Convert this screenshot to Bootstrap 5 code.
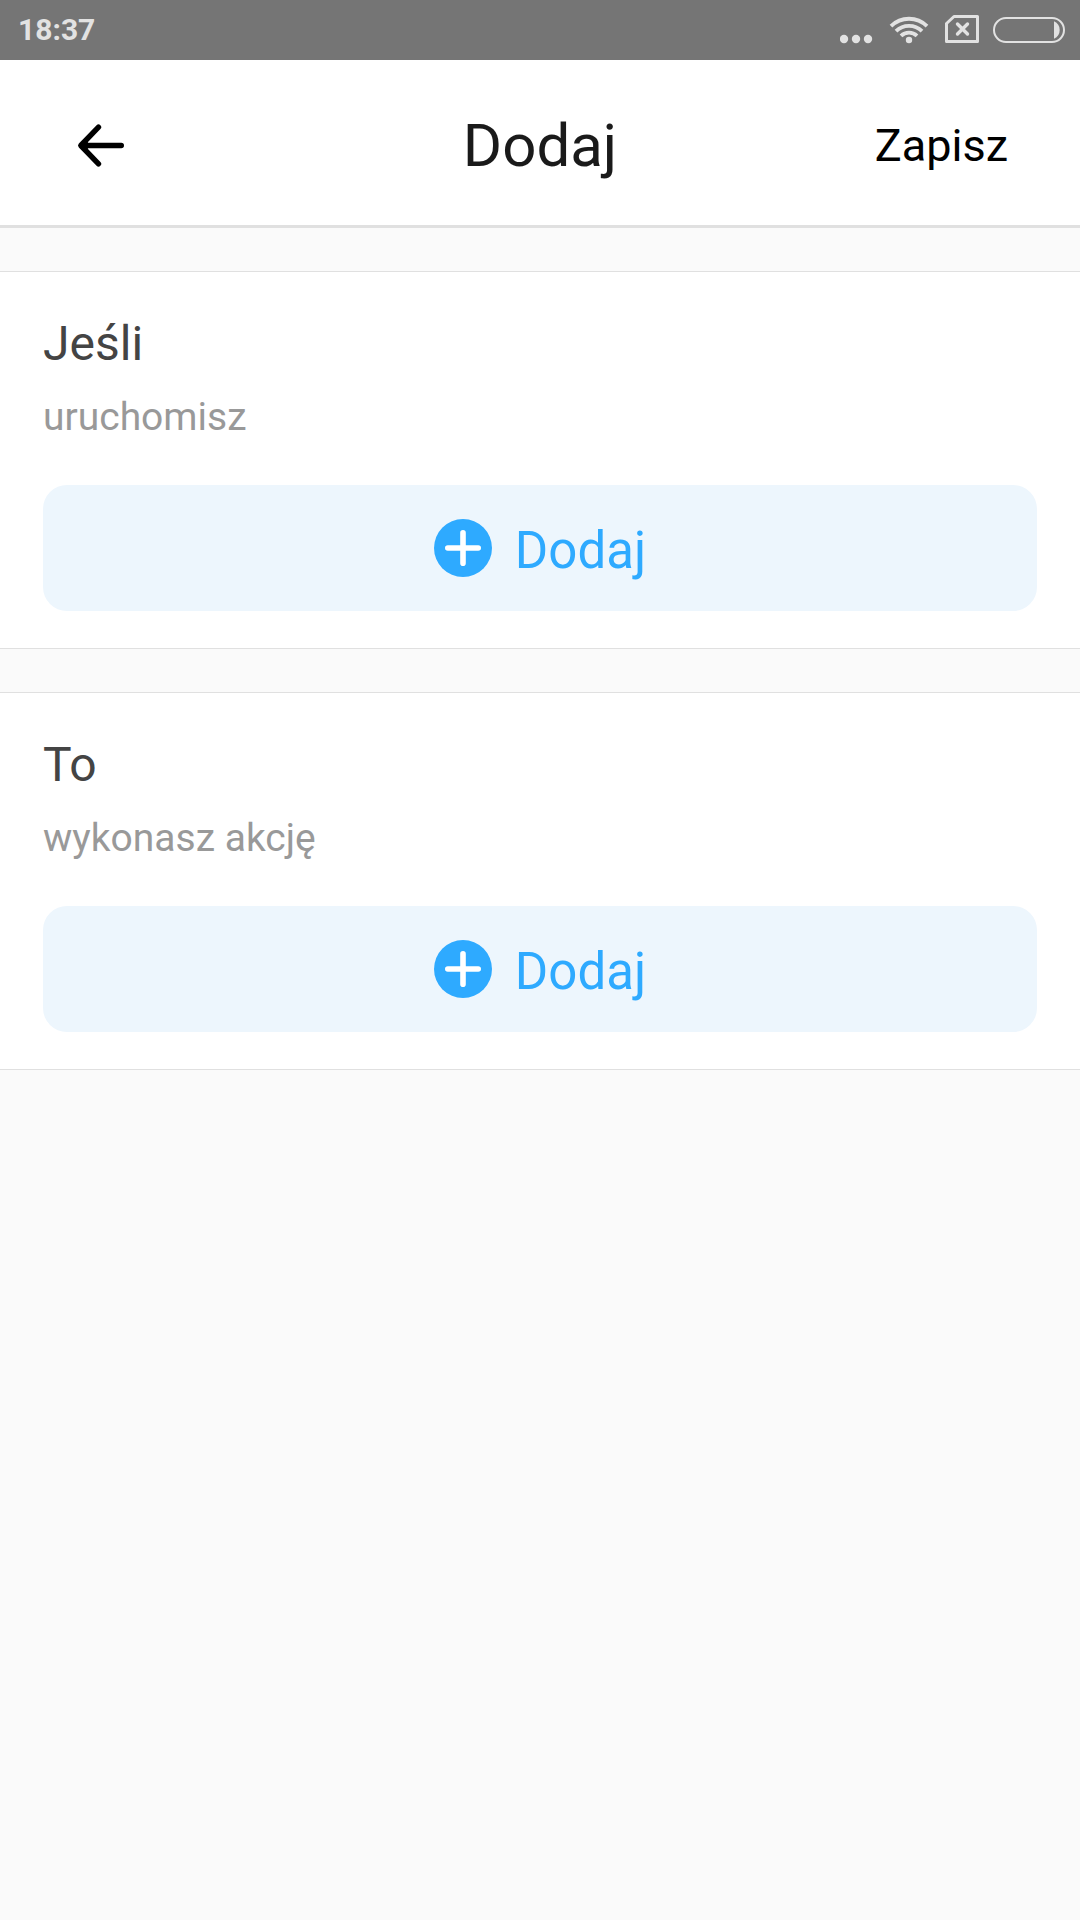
<!DOCTYPE html>
<html lang="pl">
<head>
<meta charset="utf-8">
<meta name="viewport" content="width=device-width, initial-scale=1">
<title>Dodaj</title>
<link href="https://cdn.jsdelivr.net/npm/bootstrap@5.3.0/dist/css/bootstrap.min.css" rel="stylesheet">
<style>
  body { font-family: Roboto, "Noto Sans", sans-serif; background: #fafafa; }
  svg { display: block; flex: none; }
  .status-bar { height: 60px; padding: 0 15px 0 18px; background: #757575; color: #e2e2e2; }
  .status-time { font-size: 30px; line-height: 60px; }
  .status-icons { gap: 14px; }
  .app-bar { height: 168px; padding: 6px 72px 0; border-bottom: 3px solid #e0e0e0; }
  .app-side { flex: 1 0 0; }
  .app-title { font-size: 60px; line-height: 72px; color: #1a1a1a; }
  .save-btn { font-size: 45px; line-height: 56px; color: #000; }
  .rules { display: flex; flex-direction: column; gap: 43px; padding-top: 43px; }
  .rule-box { padding: 44px 43px 37px; border: solid #e0e0e0; border-width: 1px 0; }
  .rule-title { font-size: 48px; line-height: 56px; color: #444; margin-bottom: 21px; }
  .rule-hint { font-size: 39px; line-height: 48px; color: #999; margin-bottom: 44px; }
  .add-btn { height: 126px; gap: 23px; border-radius: 24px; font-size: 51px; line-height: 60px; }
  .add-btn, .add-btn:hover, .add-btn:active { background: #edf6fd; color: #2eaaff; }
  .add-label { padding-top: 5px; }
</style>
<script src="https://cdn.jsdelivr.net/npm/bootstrap@5.3.0/dist/js/bootstrap.bundle.min.js" defer></script>
</head>
<body>
<div class="status-bar d-flex align-items-center justify-content-between">
  <span class="status-time fw-bold">18:37</span>
  <div class="status-icons d-flex" aria-hidden="true">
    <svg width="34" height="60" viewBox="840 0 34 60" fill="currentColor"><circle cx="844" cy="39" r="4.2"/><circle cx="856" cy="39" r="4.2"/><circle cx="868" cy="39" r="4.2"/></svg>
    <svg width="42" height="60" viewBox="888 0 42 60" fill="none" stroke="currentColor" stroke-width="3.8">
      <path d="M891 26.200A25.500 25.500 0 0 1 927 26.200M896 31.200A18.500 18.500 0 0 1 922 31.200M901 35.800A11.500 11.500 0 0 1 917 35.800"/>
      <circle cx="909" cy="40" r="3.200" fill="currentColor" stroke="none"/>
    </svg>
    <svg width="35" height="60" viewBox="944 0 35 60" fill="none" stroke="currentColor" stroke-width="3" stroke-linejoin="round">
      <path d="M954 16.500H977.500V41.500H946.500V23.500Z"/><path d="M957.500 24l10 10M967.500 24l-10 10" stroke-width="3.400" stroke-linecap="round"/>
    </svg>
    <svg width="72" height="60" viewBox="993 0 72 60">
      <rect x="994" y="18" width="70" height="24" rx="12" fill="none" stroke="currentColor" stroke-width="2"/>
      <path d="M1054 21.300A9.500 9.500 0 0 1 1054 38.700Z" fill="currentColor"/>
    </svg>
  </div>
</div>

<header class="app-bar bg-white d-flex align-items-center">
  <div class="app-side d-flex">
    <button type="button" class="btn p-0 border-0 rounded-0" aria-label="Wstecz">
      <svg width="60" height="60" viewBox="72 115 60 60" fill="none" stroke="#000" stroke-width="5.400" stroke-linecap="round" stroke-linejoin="round"><path d="M121.300 144.500H81M98.500 126.200L80.800 144.500L98.500 162.800"/><path d="M80.800 144.500l6-4v8z" fill="#000" stroke-width="2"/></svg>
    </button>
  </div>
  <h1 class="app-title fw-normal m-0">Dodaj</h1>
  <div class="app-side d-flex justify-content-end">
    <button type="button" class="save-btn btn p-0 border-0 rounded-0">Zapisz</button>
  </div>
</header>

<main class="rules">
  <section class="rule-box bg-white">
    <h2 class="rule-title fw-normal">Jeśli</h2>
    <p class="rule-hint">uruchomisz</p>
    <button type="button" class="add-btn btn w-100 p-0 border-0 d-flex align-items-center justify-content-center">
      <svg width="58" height="58" viewBox="0 0 58 58" aria-hidden="true"><circle cx="29" cy="29" r="29" fill="#2eaaff"/><path d="M29 13.800V44.200M13.800 29H44.200" stroke="#fff" stroke-width="5.600" stroke-linecap="round"/></svg>
      <span class="add-label">Dodaj</span>
    </button>
  </section>
  <section class="rule-box bg-white">
    <h2 class="rule-title fw-normal">To</h2>
    <p class="rule-hint">wykonasz akcję</p>
    <button type="button" class="add-btn btn w-100 p-0 border-0 d-flex align-items-center justify-content-center">
      <svg width="58" height="58" viewBox="0 0 58 58" aria-hidden="true"><circle cx="29" cy="29" r="29" fill="#2eaaff"/><path d="M29 13.800V44.200M13.800 29H44.200" stroke="#fff" stroke-width="5.600" stroke-linecap="round"/></svg>
      <span class="add-label">Dodaj</span>
    </button>
  </section>
</main>
</body>
</html>
